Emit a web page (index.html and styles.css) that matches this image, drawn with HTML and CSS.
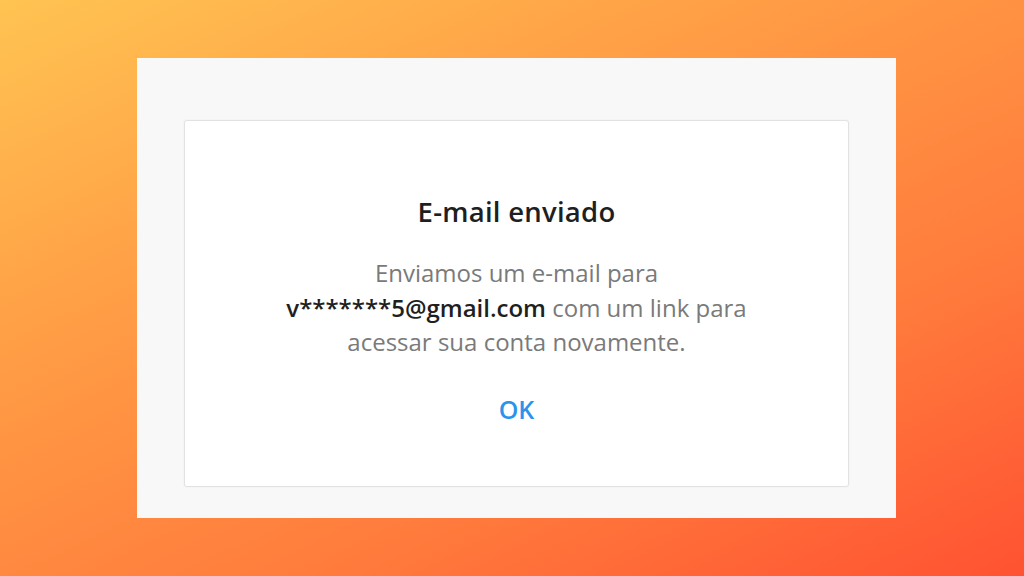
FILE: index.html
```html
<!DOCTYPE html>
<html lang="pt">
<head>
<meta charset="utf-8">
<title>E-mail enviado</title>
<link rel="stylesheet" href="styles.css">
</head>
<body>
<div class="stage">
  <div class="panel">
    <div class="card">
      <h1 class="title">E-mail enviado</h1>
      <p class="message">Enviamos um e-mail para<br><strong>v*******5@gmail.com</strong> com um link para<br>acessar sua conta novamente.</p>
      <button class="ok" type="button">OK</button>
    </div>
  </div>
</div>
</body>
</html>
```

FILE: styles.css
```css
html, body {
  margin: 0;
  padding: 0;
  width: 100%;
  height: 100%;
}
body {
  background: linear-gradient(155deg, #ffc452 0%, #ff9c45 35%, #ff7a3c 70%, #ff5232 100%);
  font-family: "Open Sans", "Noto Sans", "Liberation Sans", sans-serif;
  overflow: hidden;
}
.stage {
  height: 576px;
  display: flex;
  align-items: center;
  justify-content: flex-start;
  padding-left: 137px;
  box-sizing: border-box;
}
.panel {
  width: 759px;
  height: 460px;
  box-sizing: border-box;
  background: #f8f8f8;
  padding: 62px 47px 31px 47px;
  display: flex;
}
.card {
  flex: 1;
  background: #ffffff;
  border: 1px solid #e2e2e2;
  border-radius: 3px;
  box-shadow: 0 0 2px rgba(0,0,0,0.06);
  display: flex;
  flex-direction: column;
  align-items: center;
  padding-top: 72px;
  box-sizing: border-box;
}
.title {
  margin: 0;
  font-size: 27.5px;
  font-weight: 600;
  color: #1f1f1f;
  line-height: 38px;
  letter-spacing: 0.25px;
}
.message {
  margin: 25px 0 0 0;
  text-align: center;
  font-size: 24px;
  line-height: 34.5px;
  color: #7a7a7a;
}
.message strong {
  color: #1f1f1f;
  font-weight: 600;
}
.ok {
  margin-top: 34px;
  background: none;
  border: none;
  padding: 0;
  font-family: inherit;
  font-size: 25px;
  font-weight: 600;
  color: #2b94ea;
  line-height: 30px;
  cursor: pointer;
}
```
